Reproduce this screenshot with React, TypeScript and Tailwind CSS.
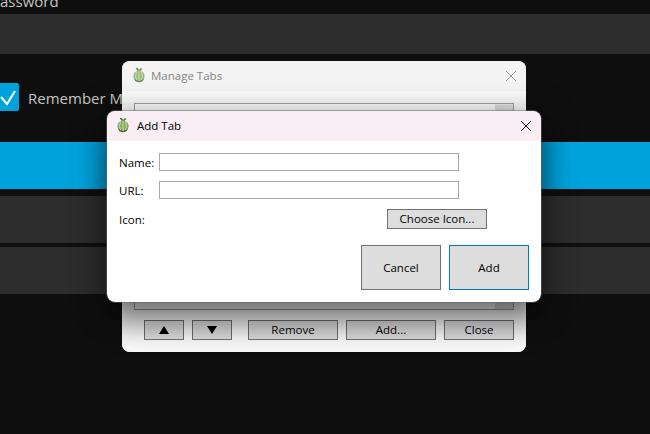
const uiFont = "font-['Segoe_UI','Open_Sans','Noto_Sans',sans-serif]";

function Melon({ faded }: { faded?: boolean }) {
  return (
    <svg width="14" height="16" viewBox="0 0 16 18" className={faded ? "opacity-80 mb-px" : "mb-px"}>
      <path d="M5 1 L8 4.5 L11 1.5" fill="none" stroke="#3f6b2a" strokeWidth="1.7" />
      <ellipse cx="8" cy="10.5" rx="6.4" ry="6.6" fill="#86ab62" />
      <path d="M5 5 Q3 10.5 5.4 16 M8 4 V17 M11 5 Q13 10.5 10.6 16" fill="none" stroke="#d3e3b4" strokeWidth="1" />
      <path d="M2 12.5 Q8 19 14 12.5 L12 16 Q8 18.5 4 16 Z" fill="#34522a" opacity="0.8" />
    </svg>
  );
}

function CloseIcon({ color }: { color: string }) {
  return (
    <svg width="12" height="12" viewBox="0 0 12 12" fill="none" stroke={color} strokeWidth="1">
      <path d="M1 1 L11 11 M11 1 L1 11" />
    </svg>
  );
}

function Triangle({ up }: { up?: boolean }) {
  return (
    <svg width="10" height="8" viewBox="0 0 10 8" fill="#000000">
      <path d={up ? "M5 0 L10 8 H0 Z" : "M0 0 H10 L5 8 Z"} />
    </svg>
  );
}

function SmallButton({ w, children }: { w: string; children: React.ReactNode }) {
  return (
    <button className={`${w} h-5 border border-[#707070] bg-[#dddddd] text-[11.5px] text-black flex items-center justify-center`}>
      {children}
    </button>
  );
}

function ManageTabs() {
  return (
    <div className="absolute left-[122px] top-[61px] w-[404px] h-[291px] rounded-lg overflow-hidden bg-white flex flex-col">
      <div className="h-[30px] bg-[#f4f4f4] flex items-center pl-[10px] pr-[9px] pb-px shrink-0">
        <Melon faded />
        <span className="ml-[5px] pt-px text-[11.5px] text-[#858585]">Manage Tabs</span>
        <div className="ml-auto"><CloseIcon color="#9a9a9a" /></div>
      </div>
      <div className="flex-1 flex flex-col pt-3 px-3 bg-[#fafafa]">
        <div className="h-[207px] border border-[#a0a0a0] bg-white flex">
          <div className="flex-1 flex items-end pl-[3px] pb-[6px] text-[11.5px] text-black">Digital Diary</div>
          <div className="w-[18px] bg-[#f0f0f0] flex flex-col justify-between pt-px">
            <div className="h-[16px] bg-[#e0e0e0]" />
            <div className="h-[16px] bg-[#e0e0e0]" />
          </div>
        </div>
        <div className="mt-[10px] flex pl-[10px]">
          <SmallButton w="w-10"><Triangle up /></SmallButton>
          <div className="ml-2"><SmallButton w="w-10"><Triangle /></SmallButton></div>
          <div className="ml-4"><SmallButton w="w-[90px]">Remove</SmallButton></div>
          <div className="ml-2"><SmallButton w="w-[90px]">Add...</SmallButton></div>
          <div className="ml-2"><SmallButton w="w-[70px]">Close</SmallButton></div>
        </div>
      </div>
    </div>
  );
}

function AddTab() {
  return (
    <div className="absolute left-[107px] top-[111px] w-[434px] h-[191px] rounded-lg overflow-hidden bg-white flex flex-col shadow-[0_6px_32px_rgba(0,0,0,0.5),0_26px_28px_rgba(0,0,0,0.3)] outline outline-[#6a6a6a]/50">
      <div className="h-[30px] bg-[#f8eef4] flex items-center pl-[9px] pr-[9px] pb-px shrink-0">
        <Melon />
        <span className="ml-[7px] pt-px text-[11.5px] text-black">Add Tab</span>
        <div className="ml-auto"><CloseIcon color="#111111" /></div>
      </div>
      <div className="flex-1 flex flex-col pt-3 pl-3 pr-3 text-[11.5px] text-black">
        <div className="flex items-center h-[18px]">
          <span className="w-10 pt-px">Name:</span>
          <div className="w-[300px] h-[18px] border border-[#a9a9b0] bg-white" />
        </div>
        <div className="flex items-center h-[18px] mt-[10px]">
          <span className="w-10 pt-px">URL:</span>
          <div className="w-[300px] h-[18px] border border-[#a9a9b0] bg-white" />
        </div>
        <div className="flex items-center h-5 mt-[10px]">
          <span className="w-[268px] pt-px">Icon:</span>
          <SmallButton w="w-[100px]">Choose Icon...</SmallButton>
        </div>
        <div className="flex justify-end gap-2 mt-4">
          <button className="w-20 h-[45px] border border-[#707070] bg-[#dddddd]">Cancel</button>
          <button className="w-20 h-[45px] border border-[#0078d4] bg-[#dddddd]">Add</button>
        </div>
      </div>
    </div>
  );
}

export default function App() {
  return (
    <div className={`relative w-[650px] h-[434px] overflow-hidden bg-[#0f0f0f] ${uiFont}`}>
      <div className="flex flex-col">
        <div className="h-[14px] flex items-end -ml-[9px] text-[15px] font-medium text-[#c4c4c4] leading-[14px] overflow-hidden">
          <span className="-translate-y-[6px]">Password</span>
        </div>
        <div className="h-10 bg-[#2d2d2d]" />
        <div className="mt-[29px] flex items-center h-7">
          <div className="w-[19px] h-7 bg-[#00a2dc] rounded-r-[2px] flex items-center justify-end overflow-hidden">
            <svg width="24" height="20" viewBox="0 0 24 20" className="shrink-0 -mr-[1px]" fill="none" stroke="white" strokeWidth="2">
              <path d="M5 10 L11 17 L19 4" />
            </svg>
          </div>
          <span className="ml-[9px] pt-[2px] text-[15px] font-medium text-[#c4c4c4]">Remember Me</span>
        </div>
        <div className="mt-[31px] h-[47px] bg-[#00a2dc]" />
        <div className="mt-[7px] h-[47px] bg-[#2d2d2d]" />
        <div className="mt-1 h-[47px] bg-[#2d2d2d]" />
      </div>
      <ManageTabs />
      <AddTab />
    </div>
  );
}
